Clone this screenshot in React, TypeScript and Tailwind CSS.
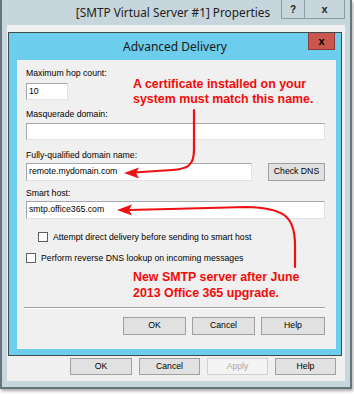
import React from 'react';

const ui = { fontFamily: '"Liberation Sans", Arial, sans-serif' };
const title = { fontFamily: '"Noto Sans", "Open Sans", sans-serif' };

function TextBox({ value, className }: { value?: string; className: string }) {
  return (
    <div className={`flex items-center bg-white border border-[#a5a9ae] border-b-[#dfe3e8] border-r-[#dfe3e8] pl-[2px] text-[8.7px] text-black ${className}`}>
      {value}
    </div>
  );
}

function Btn({ label, className, disabled }: { label: string; className: string; disabled?: boolean }) {
  return (
    <div
      className={`flex items-center justify-center border text-[8.7px] ${
        disabled ? 'bg-[#f4f4f4] border-[#d0d0d0] text-[#a8a8a8]' : 'bg-[#e1e1e1] border-[#9f9f9f] text-black'
      } ${className}`}
    >
      {label}
    </div>
  );
}

function Check({ label, className }: { label: string; className?: string }) {
  return (
    <div className={`flex items-center gap-[5px] h-[12px] ${className ?? ''}`}>
      <div className="w-[10px] h-[10px] bg-white border border-[#5f5f5f]" />
      <span className="text-[8.7px] text-black leading-[12px]">{label}</span>
    </div>
  );
}

export default function App() {
  return (
    <div className="relative w-[354px] h-[394px] bg-white overflow-hidden" style={ui}>
      {/* outer property sheet */}
      <div className="flex flex-col w-[352px] h-[389px] bg-[#c6d6dc] border-l-2 border-r-2 border-b-2 border-[#66747b] shadow-[1px_2px_3px_rgba(0,0,0,0.35)]">
        <div className="relative h-[25px] flex items-center justify-center">
          <span className="text-[11.8px] text-[#222] pr-[6px]" style={title}>
            [SMTP Virtual Server #1] Properties
          </span>
          <div className="absolute right-[5px] top-0 flex h-[19px]">
            <div className="w-[24px] h-full flex items-center justify-center border border-t-0 border-[#8c9ca3] text-[10px] font-bold text-[#222]">?</div>
            <div className="w-[40px] h-full flex items-center justify-center border border-t-0 border-l-0 border-[#8c9ca3] text-[11px] font-bold text-[#222]">x</div>
          </div>
        </div>

        <div className="flex-1 mx-[5px] mb-[6px] bg-[#f0f0f0] flex flex-col">
          {/* Advanced Delivery dialog */}
          <div className="ml-[1px] mt-[7px] w-[334px] h-[324px] border border-[#3f4b50] bg-[#6ccdec] flex flex-col">
            <div className="relative h-[27px] flex items-center justify-center">
              <span className="text-[12px] text-[#1a1a1a]" style={title}>Advanced Delivery</span>
              <div className="absolute right-[6px] top-0 w-[27px] h-[17px] bg-[#c9574d] border border-[#8d3a33] border-t-0 flex items-center justify-center text-[11px] font-bold text-black leading-none">
                x
              </div>
            </div>

            <div className="ml-[8px] w-[319px] h-[289px] bg-[#f0f0f0] pl-[9px] pr-[11px] flex flex-col">
              <div className="mt-[7px] h-[12px] leading-[12px] text-[8.7px]">Maximum hop count:</div>
              <TextBox value="10" className="mt-[4px] w-[42px] h-[17px]" />

              <div className="mt-[8px] h-[12px] leading-[12px] text-[8.7px]">Masquerade domain:</div>
              <TextBox className="mt-[3px] w-full h-[17px]" />

              <div className="mt-[9px] h-[12px] leading-[12px] text-[8.7px]">Fully-qualified domain name:</div>
              <div className="mt-[2px] flex items-center justify-between">
                <TextBox value="remote.mydomain.com" className="w-[226px] h-[18px]" />
                <Btn label="Check DNS" className="w-[57px] h-[18px]" />
              </div>

              <div className="mt-[6px] h-[12px] leading-[12px] text-[8.7px]">Smart host:</div>
              <TextBox value="smtp.office365.com" className="mt-[2px] w-full h-[18px]" />

              <Check label="Attempt direct delivery before sending to smart host" className="mt-[12px] ml-[12px]" />
              <Check label="Perform reverse DNS lookup on incoming messages" className="mt-[9px]" />

              <div className="mt-[43px] -ml-[2px] border-t border-[#a0a0a0] border-b border-b-white" />

              <div className="mt-[8px] flex justify-end gap-[6px]">
                <Btn label="OK" className="w-[63px] h-[18px]" />
                <Btn label="Cancel" className="w-[63px] h-[18px]" />
                <Btn label="Help" className="w-[64px] h-[18px]" />
              </div>
            </div>
          </div>

          <div className="mt-[2px] flex justify-end gap-[7px] pr-[9px]">
            <Btn label="OK" className="w-[62px] h-[17px]" />
            <Btn label="Cancel" className="w-[61px] h-[17px]" />
            <Btn label="Apply" className="w-[61px] h-[17px]" disabled />
            <Btn label="Help" className="w-[61px] h-[17px]" />
          </div>
        </div>
      </div>

      {/* callouts */}
      <div className="absolute left-[133px] top-[77px] text-[12.4px] leading-[15px] font-bold text-[#f50a0a]">
        A certificate installed on your<br />system must match this name.
      </div>
      <div className="absolute left-[133px] top-[270px] text-[12.4px] leading-[15.5px] font-bold text-[#f50a0a]">
        New SMTP server after June<br />2013 Office 365 upgrade.
      </div>

      <svg className="absolute inset-0 pointer-events-none" width="354" height="394" viewBox="0 0 354 394">
        <g fill="none" stroke="#ee1111" strokeWidth="2.2" strokeLinecap="round">
          <path d="M194 110 L194 150 C194 165 188 169 172 170 L134 172.5" />
          <path d="M295 267 L295 245 C295 216 284 208 246 207 L170 209 L128 210" />
        </g>
        <g fill="#ee1111">
          <polygon points="124,173 139,167.5 136,173 139,178.5" />
          <polygon points="117,210 132,204.5 129,210 132,215.5" />
        </g>
      </svg>
    </div>
  );
}
